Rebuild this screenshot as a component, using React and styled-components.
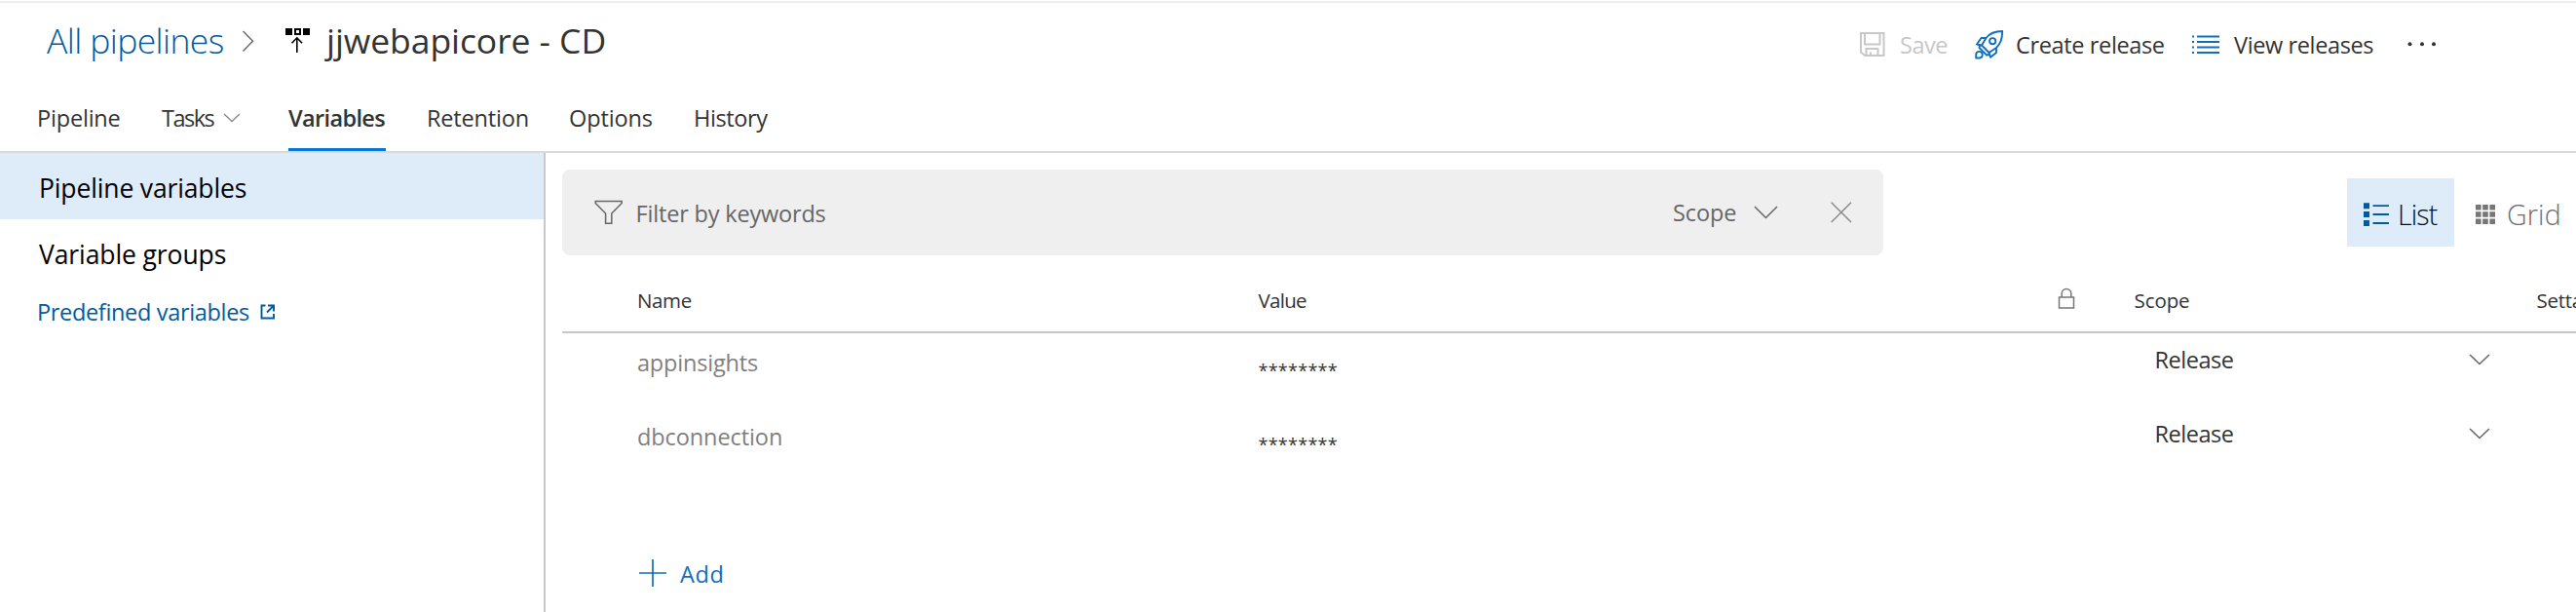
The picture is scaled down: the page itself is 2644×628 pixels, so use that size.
import React from 'react';
import styled, { createGlobalStyle } from 'styled-components';

const Global = createGlobalStyle`
  * { box-sizing: border-box; }
  body {
    margin: 0;
    background: #fff;
    color: #333;
    font-family: 'Open Sans', 'Noto Sans', sans-serif;
    font-size: 23.5px;
    overflow: hidden;
  }
  svg { display: block; flex: none; fill: none; }
`;

const Page = styled.div`
  width: 2644px;
  height: 628px;
  padding-top: 1px;
  overflow: hidden;
  white-space: nowrap;
`;

/* Text whose tracking is tuned per string */
const Label = styled.span`
  letter-spacing: ${(p) => p.$track || 0}px;
`;

const Header = styled.header`
  height: 156px;
  border-top: 2px solid #eeeeee;
  border-bottom: 2px solid #d9d9d9;
`;

const TitleRow = styled.div`
  display: flex;
  align-items: center;
  justify-content: space-between;
  height: 76px;
  padding: 0 143px 0 48px;
`;

const Breadcrumb = styled.div`
  display: flex;
  align-items: center;
  font-size: 35.5px;
`;

const CrumbLink = styled.a`
  width: 200px;
  color: #005a9e;
  font-weight: 300;
`;

const CrumbIcon = styled.span`
  width: ${(p) => p.$width}px;
`;

const Toolbar = styled.div`
  display: flex;
  align-items: center;
  gap: 27px;
  height: 76px;
  padding-top: 9px;
`;

const Command = styled.div`
  display: flex;
  align-items: center;
  width: ${(p) => p.$width}px;
  color: ${(p) => (p.$disabled ? '#c8c8c8' : '#333')};
`;

const CommandIcon = styled.span`
  flex: none;
  width: ${(p) => p.$width || 42}px;
`;

const MoreButton = styled.div`
  width: 30px;
  margin-left: 7px;
`;

const Tabs = styled.nav`
  display: flex;
  gap: 42px;
  height: 76px;
  padding-left: 38px;
`;

const Tab = styled.div`
  display: flex;
  align-items: center;
  width: ${(p) => p.$width}px;
  padding-top: 10px;
  border-bottom: 3px solid ${(p) => (p.$active ? '#0078d7' : 'transparent')};
  font-weight: ${(p) => (p.$active ? 600 : 400)};
`;

const TabChevron = styled.span`
  margin-left: auto;
  padding-right: 7px;
`;

const Body = styled.div`
  display: flex;
  height: 471px;
`;

const Sidebar = styled.aside`
  flex: none;
  width: 560px;
  border-right: 2px solid #c8c8c8;
`;

const SideItem = styled.div`
  display: flex;
  align-items: center;
  height: 68px;
  padding: 3px 0 0 40px;
  background: ${(p) => (p.$active ? '#deecf9' : 'transparent')};
  color: #000;
  font-size: 26.5px;
`;

const DocLink = styled.a`
  display: flex;
  align-items: center;
  gap: 11px;
  height: 53px;
  padding-left: 38px;
  color: #005a9e;
`;

const Main = styled.main`
  flex: 1;
  min-width: 0;
  padding: 17px 0 0 17px;
`;

const TopBar = styled.div`
  display: flex;
  align-items: center;
  height: 88px;
`;

const FilterBar = styled.div`
  display: flex;
  align-items: center;
  width: 1356px;
  height: 88px;
  padding: 0 32px 0 33px;
  border-radius: 8px;
  background: #efefef;
  color: #666;
`;

const FilterText = styled.div`
  flex: 1;
  padding: 2px 0 0 12.5px;
`;

const ScopeFilter = styled.div`
  display: flex;
  align-items: center;
  width: 162px;
`;

const ScopeName = styled.span`
  width: 83px;
`;

const ViewSwitch = styled.div`
  display: flex;
  margin-left: auto;
`;

const ViewButton = styled.div`
  display: flex;
  align-items: center;
  width: ${(p) => p.$width}px;
  height: 70px;
  padding: 3px 0 0 ${(p) => p.$pad}px;
  gap: ${(p) => p.$gap}px;
  background: ${(p) => (p.$active ? '#deecf9' : 'transparent')};
  color: ${(p) => (p.$active ? '#00101c' : '#6e6e6e')};
  font-size: 28.5px;
  font-weight: 300;
`;

const TableGrid = styled.div`
  display: grid;
  grid-template-columns: 77px 637.5px 820px 79px 413px 1fr;
`;

const TableHead = styled(TableGrid)`
  align-items: center;
  height: 68px;
  margin-top: 12px;
  padding-top: 1px;
  border-bottom: 2px solid #c8c8c8;
  font-size: 20.5px;
`;

const TableRow = styled(TableGrid)`
  align-items: start;
  height: 75.5px;
`;

const NameCell = styled.div`
  grid-column: 2;
  line-height: 60px;
  color: #7f7f7f;
`;

const ValueCell = styled.div`
  font-size: 18px;
  line-height: 77px;
`;

const ScopeCell = styled.div`
  grid-column: 5;
  display: flex;
  align-items: center;
  justify-content: space-between;
  height: 54px;
  padding: 0 48px 0 21px;
`;

const AddButton = styled.div`
  display: flex;
  align-items: center;
  gap: 14px;
  height: 60px;
  margin: 66px 0 0 79px;
  color: #106ebe;
`;

const Chevron = ({ width, height, color = '#666', stroke = 1.5 }) => (
  <svg width={width} height={height} stroke={color} strokeWidth={stroke}>
    <path d={`M1 1L${width / 2} ${height - 1.5}L${width - 1} 1`} />
  </svg>
);

const CrumbChevron = () => (
  <svg width="14" height="24" stroke="#666" strokeWidth="1.4">
    <path d="M1.5 3L11.5 13.2L1.5 23.5" />
  </svg>
);

const ReleaseIcon = () => (
  <svg width="28" height="26">
    <g fill="#000">
      <rect x="1" y="1" width="7" height="7" />
      <rect x="19" y="1" width="7" height="7" />
    </g>
    <path stroke="#000" strokeWidth="2" d="M11 2h5v5h-5z" />
    <path stroke="#000" strokeWidth="1.6" d="M12.8 26V11M7.5 16.2L12.8 10.8L18.1 16.2" />
  </svg>
);

const SaveIcon = () => (
  <svg width="28" height="30" stroke="#c8c8c8" strokeWidth="2">
    <path d="M2 3h23.5v23H6L2 22.5z" />
    <path d="M6 3v11.5h15.5V3M7.5 26v-7h12v7M12 26v-3.5" />
  </svg>
);

const RocketIcon = () => (
  <svg width="30" height="30" stroke="#106ebe" strokeWidth="1.9" strokeLinejoin="round">
    <path d="M28.2 1C20 1 15 3.5 11.5 8L7 15.5L14.5 23L22 18C26.5 14 28.2 9 28.2 1z" />
    <path d="M11.5 8H6.5L2 14.5L7 15.5M22 18V23L16 27.8L14.5 23M5 15.5L4.5 18L12 25.5L14.5 25" />
    <circle cx="18.2" cy="11.2" r="3.1" />
    <path d="M1.2 28.5V24.8A3.3 3.3 0 1 1 4.6 28.5z" />
  </svg>
);

const ListLinesIcon = () => (
  <svg width="30" height="30" stroke="#106ebe" strokeWidth="1.8">
    <path d="M6 6.5h23M6 12h23M6 17.5h23M6 23h23" />
    <path d="M1 6.5h2M1 12h2M1 17.5h2M1 23h2" />
  </svg>
);

const MoreIcon = () => (
  <svg width="30" height="28">
    <g fill="#333">
      <circle cx="2.5" cy="13.2" r="2" />
      <circle cx="15" cy="13.2" r="2" />
      <circle cx="27" cy="13.2" r="2" />
    </g>
  </svg>
);

const ExternalIcon = () => (
  <svg width="16" height="16" stroke="#005a9e" strokeWidth="1.9">
    <path d="M5.5 1.5H1.5V14.5H14V10M8 1.5H14V7.5M14 1.5L7 8.5" />
  </svg>
);

const FunnelIcon = () => (
  <svg width="30" height="26" stroke="#666" strokeWidth="1.5">
    <path d="M1.2 1.5H28.2V3.5L17.8 14V24.3H11.6V14L1.2 3.5z" />
  </svg>
);

const CloseIcon = () => (
  <svg width="22" height="22" stroke="#8a8a8a" strokeWidth="1.5">
    <path d="M.7 .7L21 21M21 .7L.7 21" />
  </svg>
);

const BulletListIcon = () => (
  <svg width="26" height="24">
    <path fill="#005a9e" d="M0 .2h6v6H0zM0 9h6v6H0zM0 18h6v6H0z" />
    <path stroke="#005a9e" strokeWidth="1.8" d="M9.5 3.2H26M9.5 12H26M9.5 21H26" />
  </svg>
);

const TilesIcon = () => (
  <svg width="20" height="20">
    <path
      fill="#767676"
      d="M0 0h5.6v5.6H0zM7.2 0h5.6v5.6H7.2zM14.4 0H20v5.6h-5.6zM0 7.2h5.6v5.6H0zM7.2 7.2h5.6v5.6H7.2zM14.4 7.2H20v5.6h-5.6zM0 14.4h5.6V20H0zM7.2 14.4h5.6V20H7.2zM14.4 14.4H20V20h-5.6z"
    />
  </svg>
);

const LockIcon = () => (
  <svg width="18" height="25" stroke="#767676" strokeWidth="1.5">
    <path d="M1.5 10H16.5V21H1.5zM4.2 10V6.2A4.8 4.8 0 0 1 13.8 6.2V10" />
  </svg>
);

const PlusIcon = () => (
  <svg width="28" height="30">
    <path stroke="#106ebe" strokeWidth="1.7" d="M0 14H28M14 0V28" />
  </svg>
);

const tabs = [
  { name: 'Pipeline', width: 86, track: -0.19 },
  { name: 'Tasks', width: 88, track: -1.5, menu: true },
  { name: 'Variables', width: 100, track: -0.64, active: true },
  { name: 'Retention', width: 104, track: -0.18 },
  { name: 'Options', width: 86, track: -0.13 },
  { name: 'History', width: 78, track: -0.4 },
];

const variables = [
  { name: 'appinsights', track: -0.19 },
  { name: 'dbconnection', track: -0.09 },
];

export default function App() {
  return (
    <Page>
      <Global />
      <Header>
        <TitleRow>
          <Breadcrumb>
            <CrumbLink><Label $track={-0.6}>All pipelines</Label></CrumbLink>
            <CrumbIcon $width={43.5}><CrumbChevron /></CrumbIcon>
            <CrumbIcon $width={43.5}><ReleaseIcon /></CrumbIcon>
            <Label $track={-0.07}>jjwebapicore - CD</Label>
          </Breadcrumb>
          <Toolbar>
            <Command $width={92} $disabled>
              <CommandIcon><SaveIcon /></CommandIcon>
              <Label $track={-0.5}>Save</Label>
            </Command>
            <Command $width={195}>
              <CommandIcon><RocketIcon /></CommandIcon>
              <Label $track={-0.36}>Create release</Label>
            </Command>
            <Command $width={188}>
              <CommandIcon $width={44}><ListLinesIcon /></CommandIcon>
              <Label $track={-0.38}>View releases</Label>
            </Command>
            <MoreButton><MoreIcon /></MoreButton>
          </Toolbar>
        </TitleRow>
        <Tabs>
          {tabs.map((t) => (
            <Tab key={t.name} $width={t.width} $active={t.active}>
              <Label $track={t.track}>{t.name}</Label>
              {t.menu && <TabChevron><Chevron width={18} height={10} stroke={1.3} color="#888" /></TabChevron>}
            </Tab>
          ))}
        </Tabs>
      </Header>
      <Body>
        <Sidebar>
          <SideItem $active><Label $track={-0.14}>Pipeline variables</Label></SideItem>
          <SideItem><Label $track={-0.1}>Variable groups</Label></SideItem>
          <DocLink>
            <Label $track={-0.33}>Predefined variables</Label>
            <ExternalIcon />
          </DocLink>
        </Sidebar>
        <Main>
          <TopBar>
            <FilterBar>
              <FunnelIcon />
              <FilterText><Label $track={-0.18}>Filter by keywords</Label></FilterText>
              <ScopeFilter>
                <ScopeName><Label $track={-0.1}>Scope</Label></ScopeName>
                <Chevron width={25} height={14} />
              </ScopeFilter>
              <CloseIcon />
            </FilterBar>
            <ViewSwitch>
              <ViewButton $active $width={110} $pad={17} $gap={9}>
                <BulletListIcon />
                <Label $track={-0.9}>List</Label>
              </ViewButton>
              <ViewButton $width={125} $pad={22} $gap={12}>
                <TilesIcon />
                <Label $track={0.2}>Grid</Label>
              </ViewButton>
            </ViewSwitch>
          </TopBar>
          <TableHead>
            <span />
            <Label $track={-0.36}>Name</Label>
            <Label $track={-0.7}>Value</Label>
            <LockIcon />
            <Label $track={-0.08}>Scope</Label>
            <Label $track={-0.3}>Settable at release time</Label>
          </TableHead>
          {variables.map((v) => (
            <TableRow key={v.name}>
              <NameCell><Label $track={v.track}>{v.name}</Label></NameCell>
              <ValueCell><Label $track={0.27}>********</Label></ValueCell>
              <ScopeCell>
                <Label $track={-0.48}>Release</Label>
                <Chevron width={22} height={12} />
              </ScopeCell>
            </TableRow>
          ))}
          <AddButton>
            <PlusIcon />
            <Label $track={0.6}>Add</Label>
          </AddButton>
        </Main>
      </Body>
    </Page>
  );
}
